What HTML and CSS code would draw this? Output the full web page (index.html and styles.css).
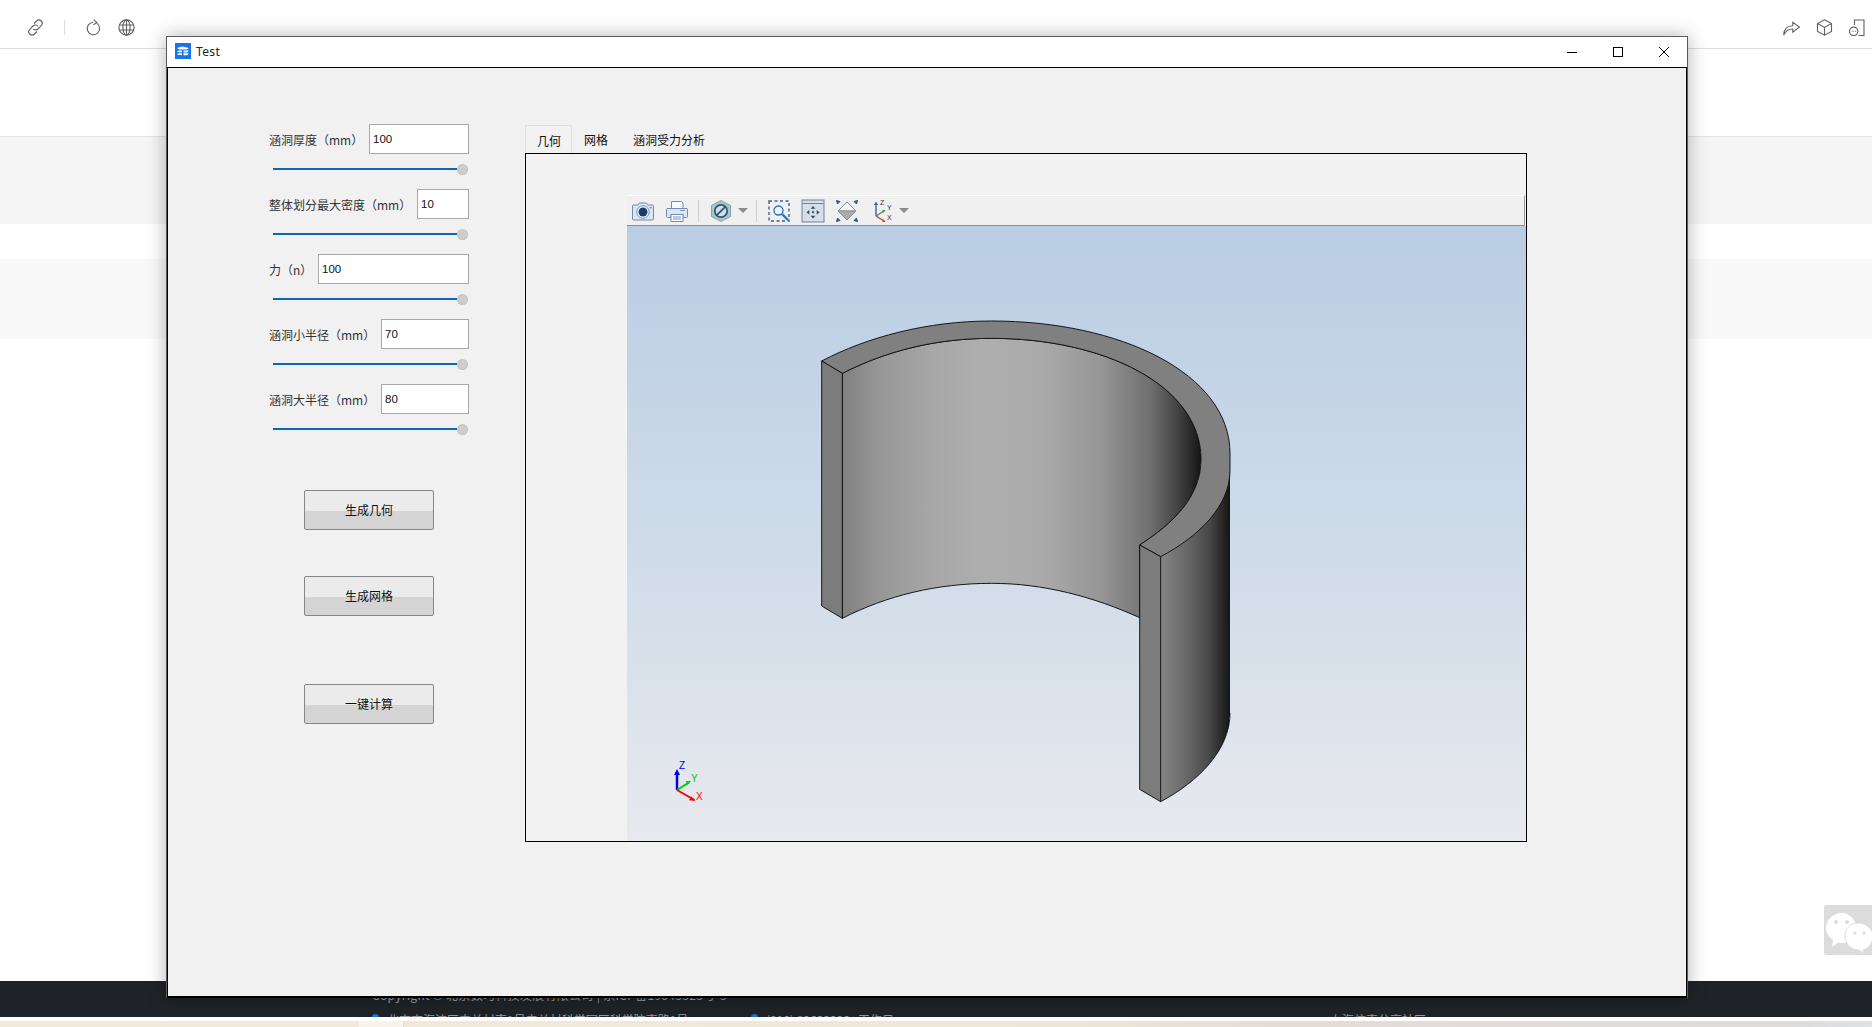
FILE: index.html
```html
<!DOCTYPE html>
<html lang="zh-CN">
<head>
<meta charset="utf-8">
<title>Test</title>
<link rel="stylesheet" href="styles.css">
</head>
<body>
<div class="page">
  <header class="topbar">
    <svg class="ticon" viewBox="0 0 17 17"><path d="M7 4.500L9.500 2a3.300 3.300 0 0 1 4.700 4.700L11 10a3.300 3.300 0 0 1-4.700 0M10 12.500L7.500 15a3.300 3.300 0 0 1-4.700-4.700L6 7a3.300 3.300 0 0 1 4.700 0"/></svg>
    <span class="tsep"></span>
    <svg class="ticon refresh" viewBox="0 0 17 17"><path d="M12 4.400A6.200 6.200 0 1 1 8 3.300M8.800 .6l3 3-3.400 2.200"/></svg>
    <svg class="ticon globe" viewBox="0 0 17 17"><circle cx="8.500" cy="8.500" r="7.600"/><ellipse cx="8.500" cy="8.500" rx="3.600" ry="7.600"/><path d="M8.500 1v15M1.300 6h14.400M1.300 11h14.400"/></svg>
    <svg class="ticon share" viewBox="0 0 17 17"><path d="M.7 16C.6 10 4.500 6.800 9.800 6.800V3.200L16.500 8l-6.700 5.200V10C6 9.800 2.800 11.500.7 16z"/></svg>
    <svg class="ticon cube" viewBox="0 0 17 17"><path d="M8.500.8l7 3.800v7.800l-7 3.800-7-3.800V4.600zM1.500 4.600l7 3.800 7-3.800M8.500 8.400v7.800"/></svg>
    <svg class="ticon doc" viewBox="0 0 17 17"><path d="M5.500 6V1h9.500v15.500H9.500"/><circle cx="4.700" cy="12.300" r="4.200"/><path d="M2.800 12.300h.8M4.400 12.300h.8M6 12.300h.8"/></svg>
  </header>
  <div class="gap-white"></div>
  <div class="band band-a"></div>
  <div class="gap-small"></div>
  <div class="band band-b"></div>
  <div class="page-fill">
    <div class="wechat">
      <svg viewBox="0 0 48 50"><path class="wc-a" d="M18 8c8 0 14 7 14 15s-6 15-14 15c-2 0-3-.3-4-.6L8 42l1-7C5 32 2 28 2 23 2 15 9 8 18 8z"/><path class="wc-b" d="M35 18c7 0 14 6 14 13s-5 13-10 14l2 4-6-4c-8 0-14-6-14-14s6-13 14-13z"/><circle class="wc-eye" cx="12" cy="17" r="2"/><circle class="wc-eye" cx="23" cy="17" r="2"/><circle class="wc-eye" cx="31" cy="28" r="1.600"/><circle class="wc-eye" cx="40" cy="28" r="1.600"/></svg>
    </div>
  </div>
  <footer class="footer">
    <p class="copyright">Copyright © 北京数巧科技发展有限公司 | 京ICP备19043323号-3</p>
    <div class="contact">
      <span class="contact-a"><i class="dot"></i>北京市海淀区中关村南1号中关村科学园区科学院南路1号</span>
      <span class="contact-b"><i class="dot"></i>(010) 82632323 &nbsp; 工作日</span>
      <span class="contact-c">上海仿真分享社区</span>
    </div>
  </footer>
  <div class="strip-gap"></div>
  <div class="strip"></div>
</div>

<section class="window">
  <div class="titlebar">
    <svg class="appicon" viewBox="0 0 16 16"><rect width="16" height="16" fill="#1a73e8"/><path d="M2 5l5-1.500 7 1.500-2 1.500H4zM2 8.200l2-.8h3v1.800H3zM8.500 7.400H14l-2 2H8.500zM2 11l2-.8h3V12H3zM8.500 10.200H14l-2 2H8.500z" fill="#fff"/></svg>
    <span class="wtitle">Test</span>
    <div class="wbtn"><svg viewBox="0 0 12 12"><path d="M1 6.500h10"/></svg></div>
    <div class="wbtn"><svg viewBox="0 0 12 12"><rect x="1.500" y="1.500" width="9" height="9"/></svg></div>
    <div class="wbtn"><svg viewBox="0 0 12 12"><path d="M1 1l10 10M11 1L1 11"/></svg></div>
  </div>
  <div class="client">
    <div class="form">
      <div class="field"><span class="flabel">涵洞厚度（mm）</span><div class="finput w100">100</div></div>
      <div class="slider"><span class="fill"></span><span class="knob"></span></div>
      <div class="field"><span class="flabel">整体划分最大密度（mm）</span><div class="finput w52">10</div></div>
      <div class="slider"><span class="fill"></span><span class="knob"></span></div>
      <div class="field"><span class="flabel">力（n）</span><div class="finput w151">100</div></div>
      <div class="slider"><span class="fill"></span><span class="knob"></span></div>
      <div class="field"><span class="flabel">涵洞小半径（mm）</span><div class="finput w88">70</div></div>
      <div class="slider"><span class="fill"></span><span class="knob"></span></div>
      <div class="field"><span class="flabel">涵洞大半径（mm）</span><div class="finput w88">80</div></div>
      <div class="slider"><span class="fill"></span><span class="knob"></span></div>
      <div class="qbtn b1">生成几何</div>
      <div class="qbtn b2">生成网格</div>
      <div class="qbtn b3">一键计算</div>
    </div>
    <div class="tabs">
      <div class="tabbar">
        <span class="tab active">几何</span>
        <span class="tab tab-mid">网格</span>
        <span class="tab">涵洞受力分析</span>
      </div>
      <div class="pane">
        <div class="viewer">
          <div class="toolbar">
            <span class="vbtn first"><svg viewBox="0 0 24 24"><path class="i-blue" d="M2.500 6H7l1.500-2h7L17 6h4.500a1 1 0 0 1 1 1v13a1 1 0 0 1-1 1h-19a1 1 0 0 1-1-1V7a1 1 0 0 1 1-1z"/><circle cx="12" cy="13" r="6.200" fill="#fff" stroke="#6f8cb5"/><circle cx="12" cy="13" r="4.500" fill="#1e3a70"/><rect x="18.500" y="7.800" width="2.500" height="1.500" fill="#8aa0c0"/></svg></span>
            <span class="vbtn"><svg viewBox="0 0 24 24"><path class="i-white" d="M6.500 9V2.500h10L18 4v5"/><path class="i-blue" d="M2 9.500h20a1 1 0 0 1 .5 1v7a1 1 0 0 1-1 1H18v-3H6v3H2.500a1 1 0 0 1-1-1v-7a1 1 0 0 1 .5-1z"/><path class="i-white" d="M6 15.500h12v7H6z"/><path d="M8 18h8M8 20h8" stroke="#7f97b8" fill="none"/><path d="M15 11.500h5" stroke="#7f97b8"/></svg></span>
            <span class="vsep"></span>
            <span class="vbtn hex"><svg viewBox="0 0 24 24"><path d="M12 1.500l9.500 5v11l-9.500 5-9.500-5v-11z" fill="#a9c6cb" stroke="#7fa5ad"/><circle cx="12" cy="12" r="6.200" fill="#cfe0e6" stroke="#2f5470" stroke-width="1.700"/><path d="M7.800 16.200L16.200 7.800" stroke="#2f5470" stroke-width="1.700"/></svg></span>
            <span class="varrow"></span>
            <span class="vsep sep2"></span>
            <span class="vbtn zoombox"><svg viewBox="0 0 24 24"><rect x="2" y="2" width="20" height="20" fill="none" stroke="#3f5f95" stroke-width="1.400" stroke-dasharray="3 2.500"/><circle cx="11.500" cy="11.500" r="4.500" fill="#eef4fb" stroke="#2f6fb0" stroke-width="1.300"/><path d="M15 15l6 6" stroke="#1f78c8" stroke-width="2.400"/></svg></span>
            <span class="vbtn"><svg viewBox="0 0 24 24"><rect x="1" y="1" width="22" height="22" fill="#d6deea" stroke="#6d80a0"/><path d="M1.500 4.500h21" stroke="#6d80a0"/><path d="M12 7l2.300 2.800h-4.600zM12 19.500l2.300-2.800h-4.600zM5.500 13.200l2.800-2.300v4.600zM18.500 13.200l-2.800-2.300v4.600z" fill="#2b4a68"/><circle cx="12" cy="13.200" r="1.100" fill="#2b4a68"/></svg></span>
            <span class="vbtn"><svg viewBox="0 0 24 24"><path d="M12 3l9 9H3z" fill="#f4f6f9" stroke="#8a8f96"/><path d="M12 21l9-9H3z" fill="#a8adb3" stroke="#8a8f96"/><path d="M1.500 1.500l3.500 1-2.500 2.500zM22.500 1.500l-3.500 1 2.500 2.500zM1.500 22.500l3.500-1-2.500-2.500zM22.500 22.500l-3.500-1 2.500-2.500z" fill="#33558a" stroke="#33558a"/></svg></span>
            <span class="vbtn axes"><svg viewBox="0 0 24 24"><path d="M6 17V5" stroke="#3a5fa8" stroke-width="1.400"/><path d="M6 2.500L8 6H4z" fill="#3a5fa8"/><path d="M6 17l8-5" stroke="#2c9a4a" stroke-width="1.400"/><path d="M15.500 11l-3.500.2 1.600 2.600z" fill="#2c9a4a"/><path d="M6 17l8 5" stroke="#d93a2f" stroke-width="1.400"/><path d="M15.500 23l-3.500-.2 1.600-2.600z" fill="#d93a2f"/><text x="10" y="6" class="axlabel">Z</text><text x="17" y="11" class="axlabel">Y</text><text x="17" y="21" class="axlabel">X</text></svg></span>
            <span class="varrow a2"></span>
          </div>
          <div class="canvas">
            <svg class="scene" viewBox="0 0 899 615">
              <defs>
                <linearGradient id="gi" gradientUnits="userSpaceOnUse" x1="127" y1="0" x2="1203" y2="0">
                  <stop offset="0" stop-color="#808080"/><stop offset=".1" stop-color="#969696"/><stop offset=".25" stop-color="#a7a7a7"/><stop offset=".38" stop-color="#aeaeae"/><stop offset=".55" stop-color="#ababab"/><stop offset=".718" stop-color="#969696"/><stop offset=".858" stop-color="#707070"/><stop offset=".932" stop-color="#454545"/><stop offset="1" stop-color="#151515"/>
                </linearGradient>
                <linearGradient id="go" gradientUnits="userSpaceOnUse" x1="1082" y1="0" x2="1290" y2="0">
                  <stop offset="0" stop-color="#858585"/><stop offset=".4" stop-color="#666"/><stop offset=".7" stop-color="#484848"/><stop offset="1" stop-color="#151515"/>
                </linearGradient>
              </defs>
              <g transform="translate(173 84) scale(.33333)" stroke="#151515" stroke-width="3" stroke-linejoin="round" shape-rendering="crispEdges">
                <path fill="url(#go)" stroke="none" d="M1082 740C1195 680 1290 590 1290 480V1209C1290 1320 1195 1415 1082 1475Z"/>
                <path fill="none" d="M1290 1209C1290 1320 1195 1415 1082 1475"/>
                <path fill="url(#gi)" d="M127 190C260 122 410 85 575 85C910 85 1203 225 1203 448C1203 560 1120 640 1019 705V923C880 860 730 820 575 820C410 820 260 857 127 925Z"/>
                <path fill="#808080" d="M65 153C200 82 380 33 575 33C960 33 1290 190 1290 430V480C1290 590 1195 680 1082 740L1019 705C1120 640 1203 560 1203 448C1203 225 910 85 575 85C410 85 260 122 127 190Z"/>
                <path fill="#7c7c7c" d="M65 153L127 190V925L65 888Z"/>
                <path fill="#7c7c7c" d="M1019 705L1082 740V1475L1019 1438Z"/>
              </g>
              <g class="triad">
                <path d="M50 564V546" stroke="#0000ee" stroke-width="2.500"/>
                <path d="M50 543l-3 6h6z" fill="#0000ee"/>
                <path d="M50 564l12-7.500" stroke="#0c0" stroke-width="2"/>
                <path d="M64 555l-5.500.2 2.200 3.600z" fill="#0c0"/>
                <path d="M50 564l17.500 10" stroke="#f00" stroke-width="2"/>
                <path d="M68.500 575l-6.500-.8 2.200-3.800z" fill="#f00"/>
                <text x="52" y="543" class="tz">Z</text>
                <text x="64" y="556" class="ty">Y</text>
                <text x="69" y="574" class="tx">X</text>
              </g>
            </svg>
          </div>
        </div>
      </div>
    </div>
  </div>
</section>
</body>
</html>
```

FILE: styles.css
```css
* { box-sizing: border-box; }
html, body { margin: 0; padding: 0; height: 100%; background: #fff; overflow: hidden; }
body { font-family: "Noto Sans CJK SC", "Noto Sans", sans-serif; font-size: 12px; }

.page { display: flex; flex-direction: column; height: 1027px; background: #fff; }

.topbar { display: flex; align-items: center; flex: none; height: 49px; padding: 6px 6px 0 27px; border-bottom: 1px solid #dedede; }
.ticon { width: 17px; height: 17px; flex: none; fill: none; stroke: #5f5f5f; stroke-width: 1.100; }
.tsep { width: 1px; height: 15px; margin-left: 20px; background: #ddd; }
.refresh { margin-left: 20px; }
.globe { margin-left: 16px; }
.share { margin-left: auto; }
.cube, .doc { margin-left: 16px; }

.gap-white { height: 87px; flex: none; }
.band { flex: none; }
.band-a { height: 88px; background: #f5f5f5; border-top: 1px solid #e2e2e2; }
.gap-small { height: 35px; flex: none; }
.band-b { height: 80px; background: #f9f9f9; }
.page-fill { flex: 1; display: flex; justify-content: flex-end; align-items: flex-start; padding-top: 566px; }

.wechat { width: 48px; height: 50px; background: #dcdcdc; border-radius: 2px 0 0 2px; overflow: hidden; }
.wechat svg { display: block; width: 48px; height: 50px; }
.wc-a { fill: #fff; }
.wc-b { fill: #fff; stroke: #dcdcdc; stroke-width: 1; }
.wc-eye { fill: #dcdcdc; }

.footer { flex: none; height: 36px; background: #1f2327; color: #9a9a9a; overflow: hidden; padding: 5px 0 0 372px; font-size: 12px; line-height: 17px; }
.copyright { margin: 0; letter-spacing: .3px; }
.contact { display: flex; margin-top: 8px; line-height: 17px; }
.contact-a { width: 379px; }
.contact-b { width: 579px; }
.dot { display: inline-block; width: 7px; height: 7px; margin-right: 8px; border-radius: 50%; background: #1677c8; vertical-align: 4px; }
.strip-gap { flex: none; height: 4px; background: #fff; }
.strip { flex: none; height: 6px; background: linear-gradient(90deg, #f3e9da 0, #f3e9da 359px, #f8f4ec 359px, #f8f4ec 403px, #e2d9cc 403px, #f2e8d9 405px, #f1e7d8 1000px, #e5dcd5 1300px, #dddcdc 1800px, #dfe1e6 1872px); }

.window { position: absolute; left: 166px; top: 36px; width: 1522px; height: 962px; display: flex; flex-direction: column; background: #fff; border: 1px solid #5c5c5c; border-bottom: 0; box-shadow: 0 0 18px rgba(0, 0, 0, .3); }
.titlebar { display: flex; align-items: center; flex: none; height: 30px; padding-left: 8px; background: #fff; }
.appicon { width: 16px; height: 16px; flex: none; margin-top: -2px; }
.wtitle { margin: -2px auto 0 5px; font-family: "Noto Sans", sans-serif; font-size: 12px; letter-spacing: .35px; color: #222; }
.wbtn { display: flex; align-items: center; justify-content: center; width: 46px; height: 30px; flex: none; }
.wbtn svg { width: 12px; height: 12px; fill: none; stroke: #000; stroke-width: 1; }

.client { flex: 1; display: flex; align-items: flex-start; padding: 56px 0 0 101px; background: #f1f1f1; border: 1px solid #000; border-bottom-width: 2px; }

.form { width: 200px; flex: none; }
.field { display: flex; align-items: center; justify-content: space-between; height: 30px; }
.flabel { color: #333; font-size: 12px; white-space: nowrap; }
.finput { height: 30px; padding-left: 3px; line-height: 29px; background: #fff; border: 1px solid #a8a8a8; color: #111; font-family: "Liberation Sans", sans-serif; font-size: 11.500px; }
.w100 { width: 100px; }
.w52 { width: 52px; }
.w151 { width: 151px; }
.w88 { width: 88px; }
.slider { display: flex; align-items: center; height: 30px; margin-bottom: 5px; padding: 0 1px 0 4px; }
.fill { flex: 1; height: 2px; background: #0d66b8; }
.knob { width: 11px; height: 11px; border-radius: 50%; background: #cdcdcd; border: 1px dotted #b5b5b5; }

.qbtn { display: flex; align-items: center; justify-content: center; width: 130px; height: 40px; margin-left: 35px; padding-bottom: 2px; border: 1px solid #868686; border-radius: 2px; color: #111; background: linear-gradient(#ebebeb 0, #ebebeb 52%, #d4d4d4 52%, #d4d4d4 100%); }
.b1 { margin-top: 46px; }
.b2 { margin-top: 46px; }
.b3 { margin-top: 68px; }

.tabs { width: 1002px; flex: none; margin: 1px 0 0 56px; }
.tabbar { display: flex; height: 28px; }
.tab { padding: 0 12px; line-height: 29px; color: #111; font-size: 12px; }
.tab-mid { padding-right: 13px; }
.tab.active { border: 1px solid #e0e0e0; border-bottom: 0; padding: 0 10px 0 11px; background: #f2f2f2; }
.pane { height: 689px; padding: 41px 0 0 101px; background: #f2f2f2; border: 1px solid #000; }

.viewer { display: flex; flex-direction: column; height: 646px; }
.toolbar { display: flex; align-items: center; flex: none; height: 31px; margin-right: 1px; background: #f0f0f0; border-top: 1px solid #fff; border-bottom: 1px solid #8e8e8e; border-right: 1px solid #9a9a9a; }
.vbtn { display: flex; align-items: center; justify-content: center; width: 34px; height: 28px; flex: none; }
.vbtn.first { margin-left: -1px; }
.vbtn svg { width: 24px; height: 24px; display: block; }
.i-blue { fill: #dbe6f3; stroke: #6f8cb5; stroke-width: 1; }
.i-white { fill: #fafbfc; stroke: #6f8cb5; stroke-width: 1; }
.vsep { width: 1px; height: 22px; margin-left: 4px; background: #cfcfcf; flex: none; }
.hex { margin-left: 5px; }
.varrow { width: 0; height: 0; border-left: 5px solid transparent; border-right: 5px solid transparent; border-top: 5px solid #8a8a8a; flex: none; }
.sep2 { margin-left: 8px; }
.zoombox { margin-left: 5px; }
.axes { margin-left: 1px; }
.axlabel { font: 7px "Liberation Sans", sans-serif; fill: #333; }

.canvas { flex: 1; overflow: hidden; background: linear-gradient(#b9cde4 0, #d5dfea 65%, #e8e9ee 100%); }
.scene { display: block; width: 899px; height: 615px; }
.tz, .ty, .tx { font: 10px "Liberation Sans", sans-serif; }
.tz { fill: #0000ee; }
.ty { fill: #0c0; }
.tx { fill: #f00; }
```
